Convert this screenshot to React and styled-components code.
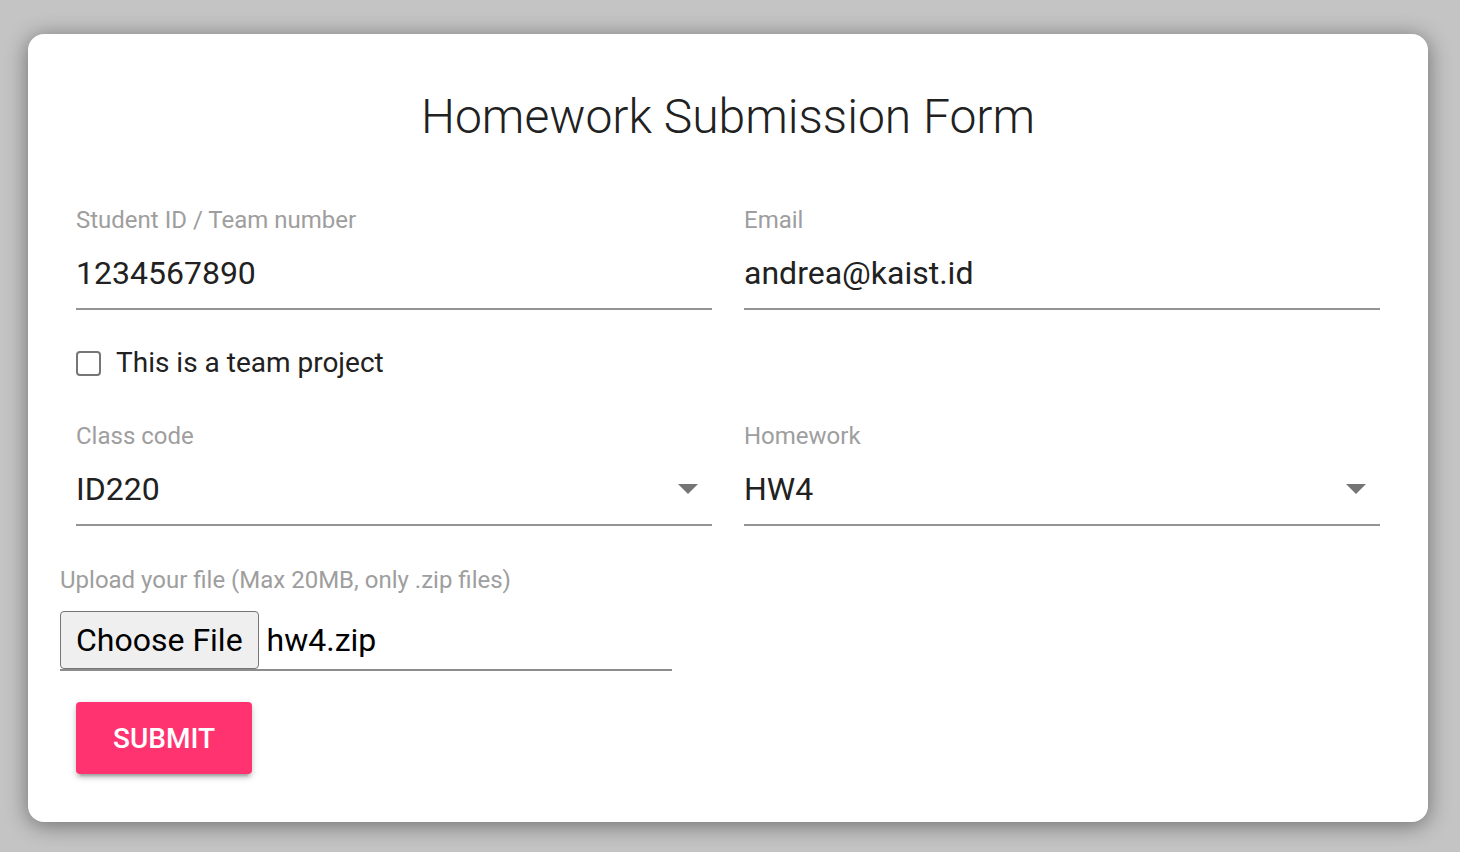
import React from "react";
import styled, { createGlobalStyle } from "styled-components";

const GlobalStyle = createGlobalStyle`
  html, body {
    margin: 0;
    padding: 0;
    background-color: #c4c4c4;
  }
  body {
    font-family: Roboto, "Liberation Sans", sans-serif;
  }
  * {
    box-sizing: border-box;
  }
`;

function Dropdown({ value }) {
  return (
    <InputRow>
      <SelectValue>{value}</SelectValue>
      <Arrow width="20" height="10" viewBox="0 0 20 10">
        <path d="M0 0 L20 0 L10 10 Z" fill="#757575" />
      </Arrow>
    </InputRow>
  );
}

const App = () => {
  return (
    <Page>
      <GlobalStyle />
      <Card>
        <Title>Homework Submission Form</Title>
        <FieldGrid>
          <Field>
            <Label>Student ID / Team number</Label>
            <InputRow>
              <TextInput readOnly value="1234567890" />
            </InputRow>
          </Field>
          <Field>
            <Label>Email</Label>
            <InputRow>
              <TextInput readOnly value="andrea@kaist.id" />
            </InputRow>
          </Field>
        </FieldGrid>

        <CheckRow>
          <CheckBox />
          <CheckLabel>This is a team project</CheckLabel>
        </CheckRow>

        <FieldGrid $top={43}>
          <Field>
            <Label>Class code</Label>
            <Dropdown value="ID220" />
          </Field>
          <Field>
            <Label>Homework</Label>
            <Dropdown value="HW4" />
          </Field>
        </FieldGrid>

        <Upload>
          <UploadLabel>Upload your file (Max 20MB, only .zip files)</UploadLabel>
          <FileBox>
            <ChooseButton type="button">Choose File</ChooseButton>
            <FileName>hw4.zip</FileName>
          </FileBox>
        </Upload>

        <SubmitButton type="button">SUBMIT</SubmitButton>
      </Card>
    </Page>
  );
};

export default App;

const Page = styled.div`
  display: flex;
  width: 100%;
  height: 100vh;
  padding: 34px 32px 30px 28px;
`;

const Card = styled.div`
  flex: 1;
  display: flex;
  flex-direction: column;
  align-items: flex-start;
  padding: 55px 32px 0;
  background-color: #ffffff;
  border-radius: 16px;
  box-shadow: 0 3px 22px rgba(0, 0, 0, 0.45);
`;

const Title = styled.h1`
  align-self: stretch;
  margin: 0;
  font-size: 48px;
  font-weight: 300;
  line-height: 56px;
  text-align: center;
  color: #212121;
`;

const FieldGrid = styled.div`
  align-self: stretch;
  display: grid;
  grid-template-columns: 1fr 1fr;
  column-gap: 32px;
  margin-top: ${(p) => p.$top || 61}px;
  padding: 0 16px;
`;

const Field = styled.div`
  display: flex;
  flex-direction: column;
`;

const Label = styled.label`
  font-size: 24px;
  line-height: 28px;
  color: #9e9e9e;
`;

const InputRow = styled.div`
  display: flex;
  align-items: center;
  height: 56px;
  margin-top: 20px;
  padding-bottom: 16px;
  border-bottom: 2px solid #949494;
`;

const TextInput = styled.input`
  flex: 1;
  height: 38px;
  padding: 0;
  border: none;
  outline: none;
  background: transparent;
  font-family: inherit;
  font-size: 32px;
  line-height: 38px;
  color: #212121;
`;

const SelectValue = styled.div`
  flex: 1;
  font-size: 32px;
  line-height: 38px;
  color: #212121;
`;

const Arrow = styled.svg`
  margin-right: 14px;
`;

const CheckRow = styled.div`
  display: flex;
  align-items: center;
  gap: 15px;
  height: 32px;
  margin-top: 37px;
  padding: 0 16px;
`;

const CheckBox = styled.span`
  width: 25px;
  height: 25px;
  border: 2px solid #767676;
  border-radius: 4px;
  background: #fff;
`;

const CheckLabel = styled.span`
  font-size: 28px;
  line-height: 32px;
  color: #212121;
`;

const Upload = styled.div`
  display: flex;
  flex-direction: column;
  margin-top: 40px;
`;

const UploadLabel = styled.div`
  font-size: 24px;
  line-height: 28px;
  color: #9e9e9e;
`;

const FileBox = styled.div`
  display: flex;
  align-items: center;
  width: 612px;
  margin-top: 17px;
  border-bottom: 2px solid #8c8c8c;
`;

const ChooseButton = styled.button`
  height: 58px;
  padding: 0 15px;
  background-color: #efefef;
  border: 1px solid #767676;
  border-radius: 4px;
  font-family: inherit;
  font-size: 32px;
  color: #000;
`;

const FileName = styled.span`
  margin-left: 8px;
  font-size: 32px;
  color: #000;
`;

const SubmitButton = styled.button`
  width: 176px;
  height: 72px;
  margin: 31px 0 0 16px;
  border: none;
  border-radius: 4px;
  background-color: #ff3370;
  color: #fff;
  font-family: inherit;
  font-size: 28px;
  font-weight: 500;
  box-shadow: 0 6px 2px -4px rgba(0, 0, 0, 0.2), 0 4px 4px rgba(0, 0, 0, 0.14),
    0 2px 10px rgba(0, 0, 0, 0.12);
`;
